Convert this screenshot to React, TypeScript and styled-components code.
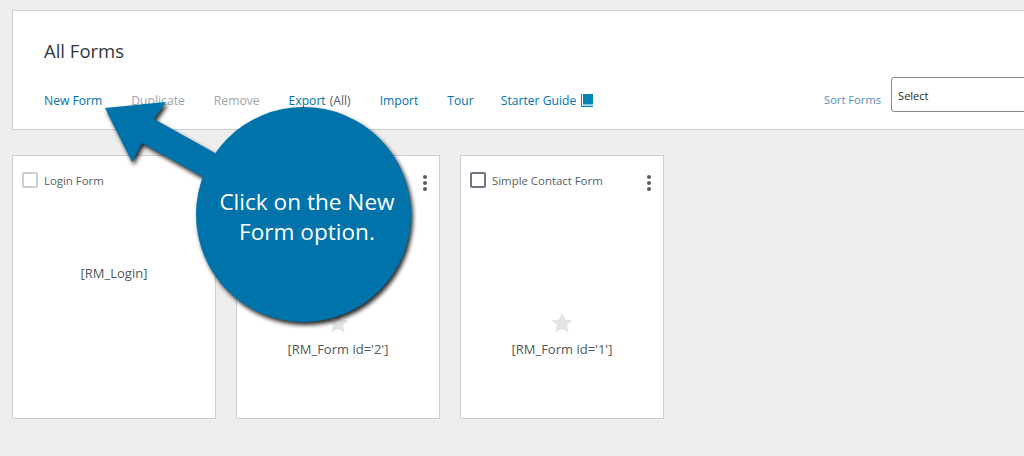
import styled, { createGlobalStyle } from "styled-components";

const GlobalStyle = createGlobalStyle`
  html, body {
    margin: 0;
    padding: 0;
    width: 1024px;
    height: 456px;
    overflow: hidden;
    background: #eeeeee;
    font-family: "Open Sans", "Liberation Sans", sans-serif;
  }
`;

const Page = styled.div`
  position: relative;
  width: 1024px;
  height: 456px;
  overflow: hidden;
  padding: 10px 0 0 12px;
  box-sizing: border-box;
`;

const Header = styled.header`
  width: 1120px;
  height: 120px;
  box-sizing: border-box;
  background: #fff;
  border: 1px solid #ccd0d4;
  padding: 27px 31px 0;
`;

const Title = styled.h1`
  margin: 0;
  height: 26px;
  font-size: 18.5px;
  line-height: 26px;
  font-weight: 400;
  color: #32373c;
`;

const Toolbar = styled.nav`
  display: flex;
  align-items: center;
  height: 36px;
  margin-top: 18px;
`;

const Actions = styled.div`
  display: flex;
  align-items: center;
  gap: 29px;
  font-size: 12.15px;
  width: 780px;
`;

const Action = styled.span<{ $off?: boolean }>`
  display: inline-flex;
  align-items: center;
  color: ${(p) => (p.$off ? "#a0a5aa" : "#0073aa")};
`;

const GuideAction = styled(Action)`
  margin-left: -2px;
`;

const Muted = styled.span`
  color: #555d66;
  margin-left: 4px;
`;

const Sort = styled.div`
  display: flex;
  align-items: center;
  gap: 10px;
`;

const SortLabel = styled.span`
  font-size: 11.2px;
  color: #5b8fb9;
  margin-bottom: 2px;
`;

const SelectBox = styled.div`
  width: 200px;
  height: 35px;
  margin-top: -11px;
  box-sizing: border-box;
  border: 1px solid #7e8993;
  border-radius: 3px;
  padding-left: 6px;
  font-size: 11px;
  line-height: 35px;
  color: #23282d;
  background: #fff;
`;

const Cards = styled.section`
  display: flex;
  gap: 20px;
  margin-top: 25px;
`;

const Card = styled.article`
  width: 204px;
  height: 264px;
  box-sizing: border-box;
  background: #fff;
  border: 1px solid #ccd0d4;
  display: flex;
  flex-direction: column;
  padding: 15px 9px 0;
`;

const CardTop = styled.div`
  display: flex;
  align-items: center;
  height: 18px;
`;

const Check = styled.span<{ $faded?: boolean }>`
  width: 16px;
  height: 16px;
  box-sizing: border-box;
  border: 2px solid ${(p) => (p.$faded ? "#ccd0d4" : "#6c7781")};
  border-radius: 2px;
  flex: none;
`;

const CardName = styled.span`
  margin-left: 6px;
  font-size: 11.4px;
  color: #555d66;
  flex: 1;
`;

const Dots = styled.span`
  display: flex;
  flex-direction: column;
  gap: 2px;
  margin: 6px 3px 0 0;
  i {
    width: 4px;
    height: 4px;
    border-radius: 50%;
    background: #555d66;
  }
`;

const CardBody = styled.div<{ $top: number }>`
  display: flex;
  flex-direction: column;
  align-items: center;
  padding-top: ${(p) => p.$top}px;
`;

const Shortcode = styled.div`
  margin-top: 7px;
  font-size: 13px;
  font-weight: 400;
  line-height: 18px;
  color: #50575e;
`;

const Callout = styled.div`
  position: absolute;
  left: 196px;
  top: 107px;
  width: 215px;
  height: 215px;
  display: flex;
  align-items: center;
  justify-content: center;
  text-align: center;
  color: #fff;
  font-size: 22.6px;
  line-height: 30px;
  padding: 5px 0 0 7px;
  box-sizing: border-box;
`;

const CalloutArt = styled.svg`
  position: absolute;
  left: 0;
  top: 0;
  filter: drop-shadow(2px 3px 2px rgba(0, 0, 0, 0.85));
`;

const GuideIcon = styled.svg`
  margin-left: 4px;
`;

function Star() {
  return (
    <svg width="22" height="21" viewBox="0 0 22 21" aria-hidden="true">
      <path
        d="M11 0.5l3.1 6.9 7.4.8-5.5 5 1.6 7.3L11 16.8l-6.6 3.7L6 13.2.5 8.2l7.4-.8z"
        fill="#e2e4e7"
      />
    </svg>
  );
}

function BookIcon() {
  return (
    <GuideIcon width="13" height="13" viewBox="0 0 13 13" aria-hidden="true">
      <path d="M3 0h10v10.500H3z" fill="#0085ba" />
      <path d="M1 0h1v11h11v2H2.500C1.500 13 1 12.400 1 11.500z" fill="#0085ba" />
      <path d="M2 11.300h11v.7H2z" fill="#fff" />
    </GuideIcon>
  );
}

function FormCard(props: {
  name?: string;
  code: string;
  top: number;
  star?: boolean;
  menu?: boolean;
  faded?: boolean;
}) {
  return (
    <Card>
      <CardTop>
        <Check $faded={props.faded} />
        <CardName>{props.name}</CardName>
        {props.menu && (
          <Dots>
            <i />
            <i />
            <i />
          </Dots>
        )}
      </CardTop>
      <CardBody $top={props.top}>
        {props.star && <Star />}
        <Shortcode>{props.code}</Shortcode>
      </CardBody>
    </Card>
  );
}

export default function App() {
  return (
    <Page>
      <GlobalStyle />
      <Header>
        <Title>All Forms</Title>
        <Toolbar>
          <Actions>
            <Action>New Form</Action>
            <Action $off>Duplicate</Action>
            <Action $off>Remove</Action>
            <Action>
              Export<Muted>(All)</Muted>
            </Action>
            <Action>Import</Action>
            <Action>Tour</Action>
            <GuideAction>
              Starter Guide
              <BookIcon />
            </GuideAction>
          </Actions>
          <Sort>
            <SortLabel>Sort Forms</SortLabel>
            <SelectBox>Select</SelectBox>
          </Sort>
        </Toolbar>
      </Header>
      <Cards>
        <FormCard name="Login Form" code="[RM_Login]" top={68} faded />
        <FormCard code="[RM_Form id='2']" top={123} star menu />
        <FormCard name="Simple Contact Form" code="[RM_Form id='1']" top={123} star menu />
      </Cards>
      <CalloutArt width="1024" height="456" viewBox="0 0 1024 456" aria-hidden="true">
        <path
          d="M105 108L166 102L154 119L215 153L203 177L142 143L132 162Z"
          fill="#0073aa"
        />
        <circle cx="303.500" cy="214.500" r="107.500" fill="#0073aa" />
      </CalloutArt>
      <Callout>
        Click on the New
        <br />
        Form option.
      </Callout>
    </Page>
  );
}
